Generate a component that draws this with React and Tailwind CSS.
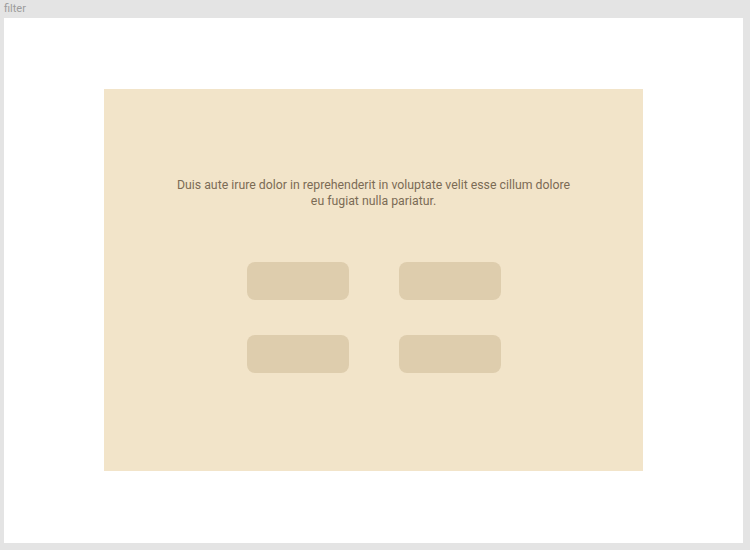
import React from 'react'

function Slot() {
  return <div className="h-[38px] w-[102px] rounded-[8px] bg-[#decdad]" />
}

export default function App() {
  return (
    <div className="h-[550px] w-[750px] bg-[#e4e4e4] font-['Roboto',sans-serif]">
      <div className="h-[18px] pl-[4px] text-[11px] leading-[18px] text-[#9c9c9c]">filter</div>
      <div className="ml-[4px] flex h-[525px] w-[739px] justify-center bg-white pt-[71px]">
        <div className="flex h-[382px] w-[539px] flex-col items-center bg-[#f2e4c9] pt-[88px]">
          <p className="w-[400px] text-center text-[12.3px] leading-[16px] text-[#7b6b55]">
            Duis aute irure dolor in reprehenderit in voluptate velit esse cillum dolore eu fugiat nulla pariatur.
          </p>
          <div className="mt-[53px] grid grid-cols-2 gap-x-[50px] gap-y-[35px]">
            <Slot />
            <Slot />
            <Slot />
            <Slot />
          </div>
        </div>
      </div>
    </div>
  )
}
